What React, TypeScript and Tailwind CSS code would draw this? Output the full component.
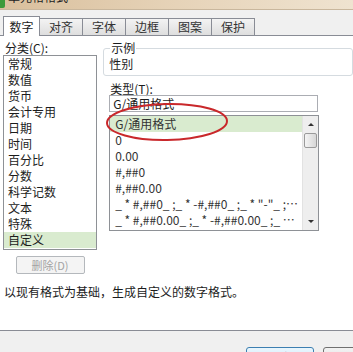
import React from "react";

const categories = [
  "常规",
  "数值",
  "货币",
  "会计专用",
  "日期",
  "时间",
  "百分比",
  "分数",
  "科学记数",
  "文本",
  "特殊",
  "自定义",
];

const formats = [
  "G/通用格式",
  "0",
  "0.00",
  "#,##0",
  "#,##0.00",
  '_ * #,##0_ ;_ * -#,##0_ ;_ * "-"_ ;_ @_ ',
  '_ * #,##0.00_ ;_ * -#,##0.00_ ;_ * "-"??_ ;_ @_ ',
];

const tabs = ["数字", "对齐", "字体", "边框", "图案", "保护"];

export default function App() {
  return (
    <div className="relative w-[353px] h-[352px] overflow-hidden bg-[#f0f0f0] text-[12px] text-[#1c1c1c] font-['Noto_Sans_CJK_SC','Microsoft_YaHei',sans-serif]">
      {/* 标题栏（被截掉一半） */}
      <div className="flex h-[10px] overflow-hidden bg-gradient-to-r from-[#d9bf9c] via-[#e6d3b8] to-[#efe3d0] border-b border-[#c9b79d]">
        <div className="ml-[-2px] mt-[-2px] h-[10px] w-[7px] rounded-[2px] bg-[#3d9a3a]" />
        <div className="ml-[3px] mt-[-10px] leading-[14px] text-[12px] text-[#222]">单元格格式</div>
      </div>

      {/* 选项卡 */}
      <div className="flex h-[25px] items-end pl-[3px]">
        {tabs.map((t, i) =>
          i === 0 ? (
            <div
              key={t}
              className="relative z-10 mb-[-1px] flex h-[20px] w-[37px] items-center justify-center border border-b-0 border-[#898c95] bg-white"
            >
              {t}
            </div>
          ) : (
            <div
              key={t}
              className="flex h-[17px] w-[43px] items-center justify-center border border-l-0 border-b-0 border-[#898c95] bg-gradient-to-b from-[#f3f3f3] to-[#dedede] text-[#333]"
            >
              {t}
            </div>
          )
        )}
      </div>

      {/* 内容区 */}
      <div className="flex h-[296px] flex-col border-t border-b border-[#898c95] bg-white">
        <div className="flex">
          {/* 分类 */}
          <div className="ml-[3px] flex w-[98px] flex-col">
            <div className="mt-[5px] h-[14px] pl-[2px] leading-[14px]">分类(C):</div>
            <div className="h-[195px] border border-[#8e9196] bg-white">
              {categories.map((c) => (
                <div
                  key={c}
                  className={
                    "h-[16px] pl-[4px] leading-[16px] " +
                    (c === "自定义" ? "bg-[#d9ebcf]" : "")
                  }
                >
                  {c}
                </div>
              ))}
            </div>
            <button className="mx-auto mt-[6px] flex h-[18px] w-[69px] items-center justify-center rounded-[2px] border border-[#b4b8bc] bg-[#f4f4f4] text-[11px] text-[#a3a3a3]">
              删除(D)
            </button>
          </div>

          {/* 右侧 */}
          <div className="ml-[6px] flex w-[260px] flex-col">
            <fieldset className="mt-[5px] h-[35px] rounded-[3px] border border-[#d5dbe0]">
              <legend className="ml-[6px] px-[1px] leading-[14px]">示例</legend>
              <div className="pl-[5px] pt-[2px] leading-[14px]">性别</div>
            </fieldset>
            <div className="ml-[7px] mt-[6px] h-[14px] leading-[14px]">类型(T):</div>
            <div className="ml-[6px] mt-[-1px] h-[17px] w-[209px] border border-[#abadb3] pl-[3px] leading-[15px]">
              G/通用格式
            </div>
            <div className="ml-[6px] mt-[3px] flex h-[116px] w-[210px] border border-[#8e9196]">
              <div className="min-w-0 flex-1">
                {formats.map((f, i) => (
                  <div
                    key={f}
                    className={
                      "h-[16px] truncate pl-[5px] pr-[2px] leading-[16px] text-[#333] " +
                      (i === 0 ? "bg-[#d9ebcf]" : "")
                    }
                  >
                    {f}
                  </div>
                ))}
              </div>
              {/* 滚动条 */}
              <div className="flex w-[16px] flex-col bg-[#eeeeee] border-l border-[#e2e2e2]">
                <div className="flex h-[17px] items-center justify-center">
                  <div className="h-0 w-0 border-x-[3px] border-b-[3px] border-x-transparent border-b-[#333]" />
                </div>
                <div className="ml-[1px] h-[15px] w-[13px] rounded-[2px] border border-[#9a9a9a] bg-gradient-to-r from-[#f4f4f4] to-[#d7d7d7]" />
                <div className="flex-1" />
                <div className="flex h-[17px] items-center justify-center">
                  <div className="h-0 w-0 border-x-[3px] border-t-[3px] border-x-transparent border-t-[#333]" />
                </div>
              </div>
            </div>
          </div>
        </div>
        <div className="ml-[4px] mt-[11px] leading-[14px]">以现有格式为基础，生成自定义的数字格式。</div>
      </div>

      {/* 按钮区 */}
      <div className="flex pl-[246px] pt-[16px]">
        <button className="h-[22px] w-[68px] shrink-0 rounded-[3px] border border-[#3c7fb1] bg-gradient-to-b from-[#eaf6fd] to-[#bee6fd] leading-[18px]">
          确定
        </button>
        <button className="ml-[9px] h-[22px] w-[68px] shrink-0 rounded-[3px] border border-[#707070] bg-gradient-to-b from-[#f2f2f2] to-[#dddddd] leading-[18px]">
          取消
        </button>
      </div>

      {/* 红色圈注 */}
      <svg className="absolute left-[105px] top-[102px]" width="126" height="42" viewBox="0 0 126 42">
        <ellipse cx="62" cy="20" rx="60" ry="18" fill="none" stroke="#c9282b" strokeWidth="2" transform="rotate(-1 62 20)" />
      </svg>
    </div>
  );
}
